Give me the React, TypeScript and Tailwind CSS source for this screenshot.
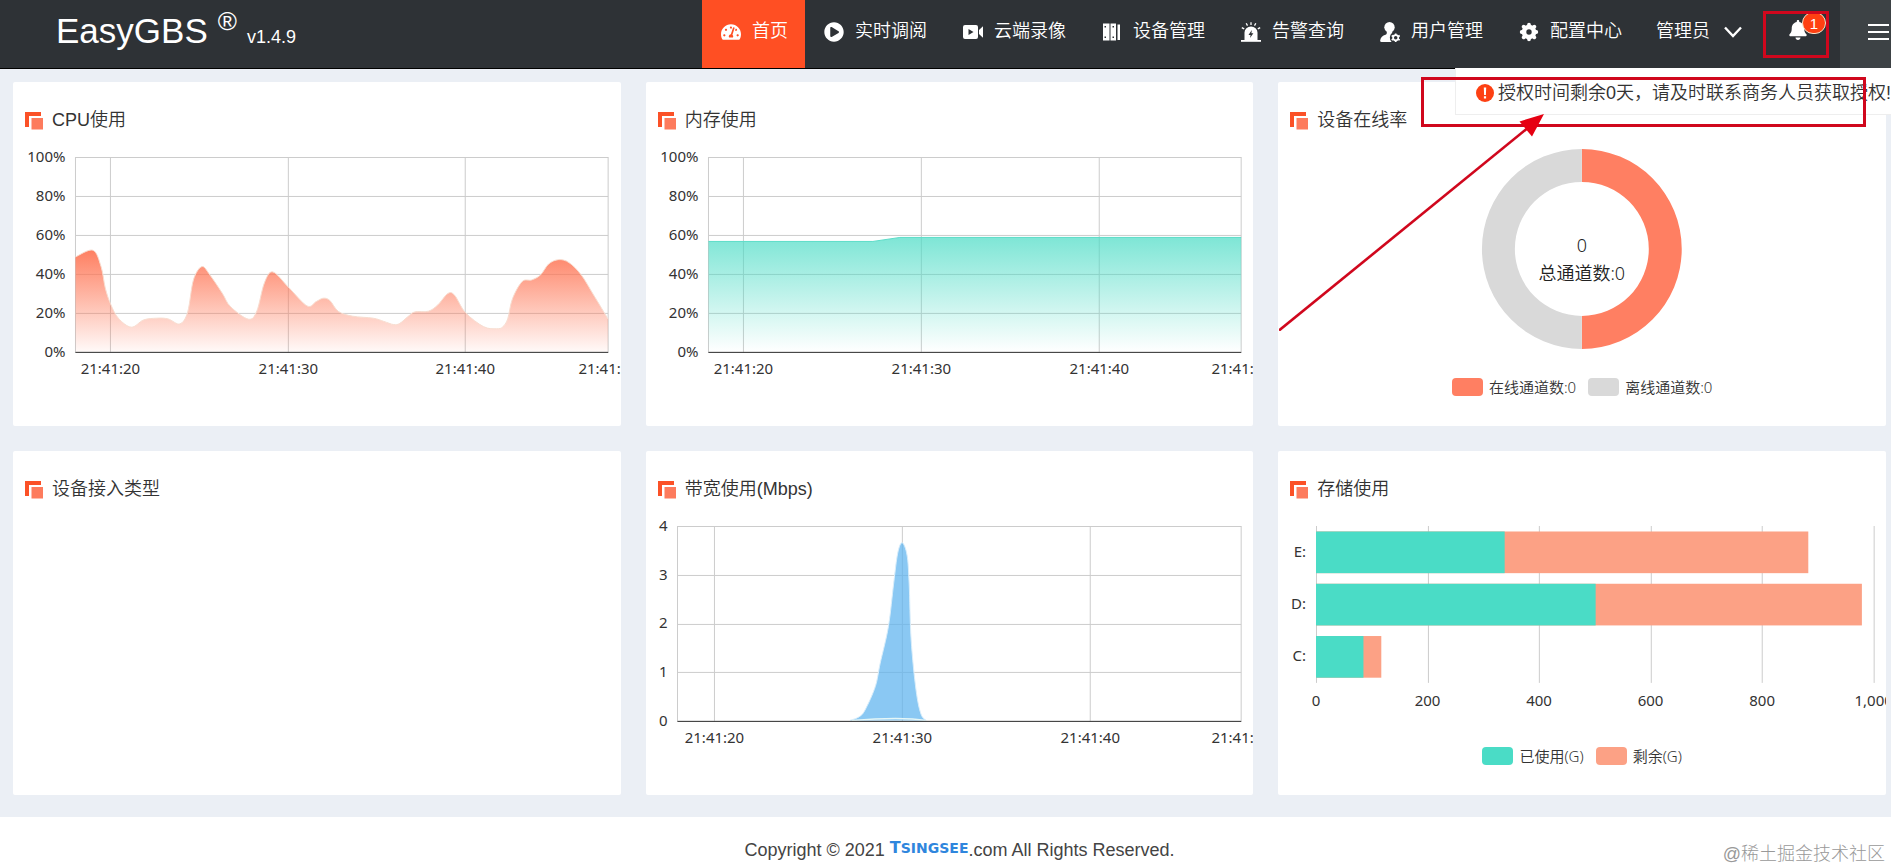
import { ReactNode } from 'react';
import { FaBell, FaPlayCircle, FaTachometerAlt } from 'react-icons/fa';

type Point = [number, number];

interface NavItem {
  label: string;
  icon: ReactNode;
  active?: boolean;
}

interface Legend {
  label: string;
  swatch: string;
}

const VideoIcon = () => (
  <svg viewBox="0 0 20 20" className="h-5 w-5 shrink-0" fill="currentColor" aria-hidden="true">
    <path
      fillRule="evenodd"
      d="M2 3h11a2 2 0 0 1 2 2v10a2 2 0 0 1-2 2H2a2 2 0 0 1-2-2V5a2 2 0 0 1 2-2zM5.500 7v6l5-3z"
    />
    <path d="M16 8 20 4.200v11.600L16 12z" />
  </svg>
);

const BinderIcon = () => (
  <svg viewBox="0 0 20 20" className="h-5 w-5 shrink-0" fill="currentColor" aria-hidden="true">
    <path fillRule="evenodd" d="M1 1.500h6.500v17H1zM2.500 4v1.400H4V4zM2.500 14.600V16H4v-1.400z" />
    <path fillRule="evenodd" d="M8.500 1.500H14v17H8.500zM10.500 4v1.400H12V4zM10.500 14.600V16H12v-1.400z" />
    <path d="M15.500 2.500H18v15.500h-2.500z" />
  </svg>
);

const SirenIcon = () => (
  <svg viewBox="0 0 20 20" className="h-5 w-5 shrink-0" fill="currentColor" aria-hidden="true">
    <path
      fillRule="evenodd"
      d="M3.500 18V10.500a6.500 6 0 0 1 13 0V18zM10.800 8l-3.300 5h2.100l-.6 3 3.400-4.700h-2z"
    />
    <path d="M0 18h20v1.800H0z" />
    <path
      d="M10 .3v2.600M5.200 1.300l1.300 2.300M14.800 1.300l-1.300 2.300M.8 5.600l2.400 1.300M19.200 5.600l-2.400 1.300"
      stroke="currentColor"
      strokeWidth="1.300"
    />
  </svg>
);

const UserGearIcon = () => (
  <svg viewBox="0 0 20 20" className="h-5 w-5 shrink-0" fill="currentColor" aria-hidden="true">
    <circle cx="9.500" cy="5.200" r="5.200" />
    <path d="M6.800 9.500h5.400v1.300a6.200 6.200 0 0 0-.6 9.200H1.500C.3 20 0 19.300.2 18.300c.5-3 2.400-4.600 5.300-5.600.9-.4 1.300-1 1.300-2z" />
    <circle cx="15.700" cy="15.800" r="2.600" fill="none" stroke="currentColor" strokeWidth="1.700" />
    <path
      d="M15.700 11.400v1.600M15.700 18.600v1.400M11.700 13.600l1.500.9M18.200 17.200l1.500.9M11.700 18l1.500-.9M18.200 14.500l1.500-.9"
      stroke="currentColor"
      strokeWidth="1.700"
    />
  </svg>
);

const GearIcon = () => (
  <svg viewBox="0 0 20 20" className="h-5 w-5 shrink-0" aria-hidden="true">
    <circle cx="10" cy="10" r="5" fill="none" stroke="currentColor" strokeWidth="4.600" />
    <g stroke="currentColor" strokeWidth="3.800" strokeLinecap="round">
      <path d="M10 2.700v1M10 16.300v1M2.700 10h1M16.300 10h1M4.700 4.700l.7.700M14.600 14.600l.7.700M4.700 15.300l.7-.7M14.600 5.400l.7-.7" />
    </g>
  </svg>
);

const TitleIcon = () => (
  <svg viewBox="0 0 18 18" className="h-[18px] w-[18px] shrink-0" aria-hidden="true">
    <path d="M0 0h16v4H4v11H0z" fill="#fb5127" />
    <rect x="6.500" y="6" width="11.500" height="11.500" fill="#fd7b5d" />
  </svg>
);

const NAV: NavItem[] = [
  { label: '首页', icon: <FaTachometerAlt className="h-5 w-5 shrink-0" />, active: true },
  { label: '实时调阅', icon: <FaPlayCircle className="h-5 w-5 shrink-0" /> },
  { label: '云端录像', icon: <VideoIcon /> },
  { label: '设备管理', icon: <BinderIcon /> },
  { label: '告警查询', icon: <SirenIcon /> },
  { label: '用户管理', icon: <UserGearIcon /> },
  { label: '配置中心', icon: <GearIcon /> },
];

const CPU: Point[] = [
  [62.5, 115], [80, 108.3], [88.2, 125], [92.3, 146], [97.6, 162], [105.4, 176.3], [118.4, 185.3],
  [130.7, 178], [144, 176.3], [155.2, 177], [167, 182], [174.8, 170], [180.5, 138], [189, 124.7],
  [197, 133], [209.4, 151.3], [217.6, 164.7], [235.6, 177.3], [244, 169], [251.5, 141], [260, 130],
  [275.6, 145.3], [294.3, 164], [303.3, 159.7], [310.3, 156.3], [317, 158.500], [325.8, 169.7], [340, 174.3],
  [360.5, 176.3], [371, 179.5], [380.9, 182.7], [387, 181.5], [395.2, 174.7], [402, 170], [415.6, 169.3],
  [425, 163], [435.2, 151.5], [442, 153.5], [452.7, 170.7], [470.7, 184.7], [484, 186.9], [490, 185],
  [495, 177], [499.7, 157], [509.4, 139.7], [519, 138], [527.8, 133], [536, 122], [546, 117.7],
  [556.4, 120.7], [568.6, 133], [580.9, 153], [595.5, 177.3],
];

const MEMORY: Point[] = [[62.5, 99.5], [227, 99.5], [254, 95.5], [595.5, 95.5]];

const BANDWIDTH: Point[] = [
  [204, 209.5], [213, 206], [219.2, 199], [229.4, 175.7], [234.3, 152.3], [242.5, 115.7],
  [247.8, 72.3], [251.8, 42.3], [256.3, 31.7], [261.2, 44], [263.3, 72.3], [265.3, 129], [270.2, 179],
  [275.1, 203], [280.4, 209.5],
];

const DISKS = [
  { name: 'E:', used: 338, total: 882 },
  { name: 'D:', used: 501, total: 978 },
  { name: 'C:', used: 85, total: 117 },
];

// Catmull-Rom spline through the points, written as cubic segments
function smooth(points: Point[]) {
  let d = `M${points[0][0]} ${points[0][1]}`;
  for (let i = 0; i < points.length - 1; i++) {
    const p0 = points[Math.max(i - 1, 0)];
    const p1 = points[i];
    const p2 = points[i + 1];
    const p3 = points[Math.min(i + 2, points.length - 1)];
    d += `C${p1[0] + (p2[0] - p0[0]) / 6} ${p1[1] + (p2[1] - p0[1]) / 6} ${p2[0] - (p3[0] - p1[0]) / 6} ${
      p2[1] - (p3[1] - p1[1]) / 6
    } ${p2[0]} ${p2[1]}`;
  }
  return d;
}

function straight(points: Point[]) {
  return `M${points.map((p) => p.join(' ')).join('L')}`;
}

const chartText = "font-['Noto_Sans','Noto_Sans_CJK_SC',sans-serif] text-[15px] fill-[#333]";

interface AreaChartProps {
  label: string;
  left: number;
  rows: string[];
  ticks: number[];
  children: ReactNode;
}

function AreaChart({ label, left, rows, ticks, children }: AreaChartProps) {
  const step = 195 / (rows.length - 1);
  const times = ['21:41:20', '21:41:30', '21:41:40', '21:41:50'];

  return (
    <svg viewBox="0 0 608 284" className="block w-full" role="img" aria-label={label}>
      <g stroke="#ccc" strokeWidth="1">
        {rows.map((row, i) => (
          <line key={row} x1={left} x2="595.500" y1={Math.round(15 + step * i) + 0.5} y2={Math.round(15 + step * i) + 0.5} />
        ))}
        {[left, ...ticks, 595.5].map((x) => (
          <line key={x} x1={x} x2={x} y1="15" y2="211" />
        ))}
      </g>
      {children}
      <line x1={left} x2="595.500" y1="210.500" y2="210.500" stroke="#333" strokeWidth="1" />
      {rows.map((row, i) => (
        <text key={row} x={left - 10} y={20 + step * i} textAnchor="end" className={chartText}>
          {row}
        </text>
      ))}
      {[...ticks, 595.5].map((x, i) => (
        <text key={x} x={x} y="232" textAnchor="middle" className={chartText}>
          {times[i]}
        </text>
      ))}
    </svg>
  );
}

function LegendRow({ items }: { items: Legend[] }) {
  return (
    <ul className="flex items-center justify-center gap-3">
      {items.map((item) => (
        <li key={item.label} className="flex h-[18px] items-center gap-[6px]">
          <span className={`h-[18px] w-[31px] rounded ${item.swatch}`} />
          <span className="font-['Noto_Sans','Noto_Sans_CJK_SC',sans-serif] text-[15px] leading-[18px] font-[350]">{item.label}</span>
        </li>
      ))}
    </ul>
  );
}

function Card({ title, children }: { title: string; children?: ReactNode }) {
  return (
    <section className="min-h-[344px] overflow-hidden rounded-xs bg-white">
      <h2 className="flex h-[60px] items-center gap-[9px] pt-[17px] pl-3 text-[18px] leading-[27px] font-[350]">
        <TitleIcon />
        {title}
      </h2>
      {children}
    </section>
  );
}

const PERCENT = ['100%', '80%', '60%', '40%', '20%', '0%'];

export default function App() {
  return (
    <div className="relative flex min-h-screen flex-col overflow-hidden bg-[#ebeff5] font-['Liberation_Sans','Noto_Sans_CJK_SC',sans-serif] text-[#333]">
      {/* Top bar */}
      <header className="flex h-[69px] items-stretch justify-between border-b border-black bg-[#2e3236] text-[18px] font-[350] text-white">
        <div className="flex items-center pb-[7px] pl-14">
          <h1 className="flex items-baseline whitespace-nowrap">
            <span className="text-[35px] leading-10">EasyGBS</span>
            <sup className="ml-[10px] text-[26px]">®</sup>
            <span className="ml-[10px]">v1.4.9</span>
          </h1>
        </div>

        <div className="flex items-stretch">
          <nav className="flex items-stretch">
            {NAV.map((item) => (
              <a
                key={item.label}
                href="#"
                className={`flex items-center gap-[11px] pr-[17px] pb-[5px] pl-[19px] whitespace-nowrap ${item.active ? 'bg-[#ff4f23]' : ''}`}
              >
                {item.icon}
                {item.label}
              </a>
            ))}
          </nav>
          <button type="button" className="flex items-center gap-[14px] pb-[5px] pl-[17px] whitespace-nowrap">
            管理员
            <svg viewBox="0 0 18 18" className="h-[18px] w-[18px]" fill="none" stroke="currentColor" strokeWidth="2.400" aria-hidden="true">
              <path d="M1 4.500l8 8.500 8-8.500" />
            </svg>
          </button>
          <button type="button" aria-label="消息" className="relative mr-[11px] ml-[21px] flex w-[66px] items-center justify-center pb-[8px] pl-1">
            <FaBell className="h-5 w-5" />
            <span className="absolute top-[12px] right-[3px] flex h-[22px] w-6 items-center justify-center rounded-full border border-[#fbe3c8] bg-[#ff4012] text-[15px] leading-none">
              1
            </span>
            <span className="absolute inset-x-0 top-[11px] h-[47px] border-[3px] border-[#d0071d]" />
          </button>
          <button type="button" aria-label="菜单" className="flex w-[51px] items-center justify-end bg-[#3d4245] pr-[2px] pb-[4px]">
            <svg viewBox="0 0 21 18" className="h-[18px] w-[21px]" fill="currentColor" aria-hidden="true">
              <path d="M0 1h21v2H0zM0 8h21v2H0zM0 15h21v2H0z" />
            </svg>
          </button>
        </div>
      </header>

      {/* Dashboard */}
      <main className="grid grid-cols-3 gap-[25px] pt-[13px] pr-[5px] pb-[22px] pl-[13px]">
        <Card title="CPU使用">
          <AreaChart label="CPU使用" left={62.5} rows={PERCENT} ticks={[97.5, 275.5, 452.5]}>
            <defs>
              <linearGradient id="cpuFill" x1="0" y1="0" x2="0" y2="1">
                <stop offset="0" stopColor="#fe7453" stopOpacity="0.920" />
                <stop offset="1" stopColor="#fe7453" stopOpacity="0.040" />
              </linearGradient>
            </defs>
            <path d={`${smooth(CPU)}V210H62.500Z`} fill="url(#cpuFill)" />
            <path d={smooth(CPU)} fill="none" stroke="#f7ddd0" strokeWidth="1" />
          </AreaChart>
        </Card>

        <Card title="内存使用">
          <AreaChart label="内存使用" left={62.5} rows={PERCENT} ticks={[97.5, 275.5, 453.5]}>
            <defs>
              <linearGradient id="memoryFill" x1="0" y1="0" x2="0" y2="1">
                <stop offset="0" stopColor="#47dbc4" stopOpacity="0.700" />
                <stop offset="1" stopColor="#47dbc4" stopOpacity="0" />
              </linearGradient>
            </defs>
            <path d={`${straight(MEMORY)}V210H62.500Z`} fill="url(#memoryFill)" />
            <path d={straight(MEMORY)} fill="none" stroke="#5cdcc8" strokeWidth="1" />
          </AreaChart>
        </Card>

        <Card title="设备在线率">
          <svg viewBox="0 0 608 236" className="block w-full" role="img" aria-label="设备在线率">
            <path d="M304 7a100 100 0 0 1 0 200v-33a67 67 0 0 0 0-134z" fill="#ff7f62" />
            <path d="M304 7a100 100 0 0 0 0 200v-33a67 67 0 0 1 0-134z" fill="#d9d9d9" />
            <text x="304" y="110" textAnchor="middle" className="fill-[#222] font-['Noto_Sans','Noto_Sans_CJK_SC',sans-serif] text-[18px] font-[350]">
              0
            </text>
            <text x="304" y="138" textAnchor="middle" className="fill-[#222] font-['Noto_Sans','Noto_Sans_CJK_SC',sans-serif] text-[18px] font-[350]">
              总通道数:0
            </text>
          </svg>
          <LegendRow
            items={[
              { label: '在线通道数:0', swatch: 'bg-[#ff7f62]' },
              { label: '离线通道数:0', swatch: 'bg-[#d9d9d9]' },
            ]}
          />
        </Card>

        <Card title="设备接入类型" />

        <Card title="带宽使用(Mbps)">
          <AreaChart label="带宽使用(Mbps)" left={31.5} rows={['4', '3', '2', '1', '0']} ticks={[68.5, 256.5, 444.5]}>
            <path d={`${smooth(BANDWIDTH)}Z`} fill="#5fb4ee" fillOpacity="0.730" />
            <path d={smooth(BANDWIDTH)} fill="none" stroke="#dbeefa" strokeWidth="1" />
            <path d="M206 209.500q50-4 74 0" fill="none" stroke="#e6f7f7" strokeWidth="1.500" />
          </AreaChart>
        </Card>

        <Card title="存储使用">
          <svg viewBox="0 0 608 236" className="block w-full" role="img" aria-label="存储使用">
            {['0', '200', '400', '600', '800', '1,000'].map((tick, i) => (
              <g key={tick}>
                <line x1={Math.round(38 + i * 111.6) + 0.5} x2={Math.round(38 + i * 111.6) + 0.5} y1="15" y2="172" stroke="#ccc" />
                <text x={38 + i * 111.6} y="195" textAnchor="middle" className={chartText}>
                  {tick}
                </text>
              </g>
            ))}
            {DISKS.map((disk, i) => (
              <g key={disk.name}>
                <rect x="38" y={20.5 + i * 52.3} width={disk.total * 0.5585} height="41.700" fill="#fca185" />
                <rect x="38" y={20.5 + i * 52.3} width={disk.used * 0.5585} height="41.700" fill="#4adcc6" />
                <text x="28" y={46 + i * 52.3} textAnchor="end" className={chartText}>
                  {disk.name}
                </text>
              </g>
            ))}
          </svg>
          <LegendRow
            items={[
              { label: '已使用(G)', swatch: 'bg-[#4adcc6]' },
              { label: '剩余(G)', swatch: 'bg-[#fca185]' },
            ]}
          />
        </Card>
      </main>

      {/* Footer */}
      <footer className="relative flex grow items-center justify-center bg-white pt-4 pl-7 text-[18px] text-[#444]">
        <p className="whitespace-nowrap">
          Copyright © 2021{' '}
          <span className="align-[3px] font-['DejaVu_Sans',sans-serif] text-[14px] leading-none font-bold text-[#2f86dd]">
            <span className="text-[16px]">T</span>SINGSEE
          </span>
          .com All Rights Reserved.
        </p>
        <span className="absolute right-[6px] bottom-0 font-light text-[#999]">@稀土掘金技术社区</span>
      </footer>

      {/* Licence notice under the bell */}
      <div role="alert" className="absolute top-[68px] right-0 flex h-[47px] w-[436px] items-center gap-1 border-b border-l border-[#eee] bg-white pt-1 pl-[20px] text-[18px] font-[350] whitespace-nowrap">
        <svg viewBox="0 0 18 18" className="h-[18px] w-[18px] shrink-0" aria-hidden="true">
          <circle cx="9" cy="9" r="9" fill="#fd4013" />
          <path d="M7.800 3.500h2.400L9.900 11H8.100zM7.900 12.300h2.200v2.200H7.900z" fill="#fff" />
        </svg>
        授权时间剩余0天，请及时联系商务人员获取授权!
      </div>

      {/* Red callout box and arrow */}
      <div className="pointer-events-none absolute top-[77px] right-[25px] h-[50px] w-[445px] border-[3px] border-[#d0071d]" />
      <svg viewBox="0 0 265 217" className="pointer-events-none absolute top-[114px] right-[347px] h-[217px] w-[265px]" aria-hidden="true">
        <path d="M0 216.500 250 13" stroke="#d0071d" strokeWidth="2.600" />
        <path d="M265 0 240.500 7.500 253 22.500z" fill="#e60012" />
      </svg>
    </div>
  );
}
